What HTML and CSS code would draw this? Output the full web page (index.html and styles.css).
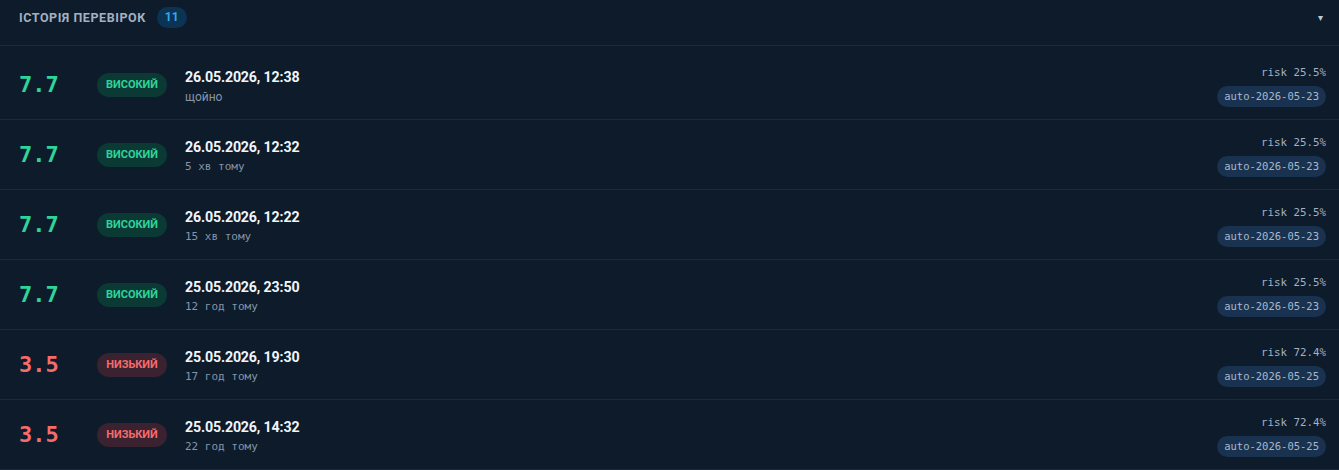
FILE: index.html
```html
<!DOCTYPE html>
<html lang="uk">
<head>
<meta charset="utf-8">
<title>Історія перевірок</title>
<link rel="stylesheet" href="styles.css">
</head>
<body>
<section class="panel">
  <header class="panel-head">
    <div class="head-left">
      <h2 class="title">Історія перевірок</h2>
      <span class="count">11</span>
    </div>
    <span class="caret">▾</span>
  </header>
  <ul class="list">
    <li class="row">
      <span class="score high">7.7</span>
      <span class="level high">високий</span>
      <div class="when"><div class="date">26.05.2026, 12:38</div><div class="ago sans">щойно</div></div>
      <div class="meta"><span class="risk">risk 25.5%</span><span class="tag">auto-2026-05-23</span></div>
    </li>
    <li class="row">
      <span class="score high">7.7</span>
      <span class="level high">високий</span>
      <div class="when"><div class="date">26.05.2026, 12:32</div><div class="ago">5 хв тому</div></div>
      <div class="meta"><span class="risk">risk 25.5%</span><span class="tag">auto-2026-05-23</span></div>
    </li>
    <li class="row">
      <span class="score high">7.7</span>
      <span class="level high">високий</span>
      <div class="when"><div class="date">26.05.2026, 12:22</div><div class="ago">15 хв тому</div></div>
      <div class="meta"><span class="risk">risk 25.5%</span><span class="tag">auto-2026-05-23</span></div>
    </li>
    <li class="row">
      <span class="score high">7.7</span>
      <span class="level high">високий</span>
      <div class="when"><div class="date">25.05.2026, 23:50</div><div class="ago">12 год тому</div></div>
      <div class="meta"><span class="risk">risk 25.5%</span><span class="tag">auto-2026-05-23</span></div>
    </li>
    <li class="row">
      <span class="score low">3.5</span>
      <span class="level low">низький</span>
      <div class="when"><div class="date">25.05.2026, 19:30</div><div class="ago">17 год тому</div></div>
      <div class="meta"><span class="risk">risk 72.4%</span><span class="tag">auto-2026-05-25</span></div>
    </li>
    <li class="row">
      <span class="score low">3.5</span>
      <span class="level low">низький</span>
      <div class="when"><div class="date">25.05.2026, 14:32</div><div class="ago">22 год тому</div></div>
      <div class="meta"><span class="risk">risk 72.4%</span><span class="tag">auto-2026-05-25</span></div>
    </li>
  </ul>
</section>
</body>
</html>
```

FILE: styles.css
```css
* { box-sizing: border-box; }
html, body {
  margin: 0;
  padding: 0;
  background: #0d1b2b;
  font-family: Roboto, "Noto Sans", sans-serif;
  color: #e6edf5;
}
.panel {
  background: #0d1b2b;
}
.panel-head {
  height: 46px;
  display: flex;
  align-items: center;
  justify-content: space-between;
  padding: 0 16px 11px 19px;
  border-bottom: 1px solid #1b2a3d;
}
.head-left {
  display: flex;
  align-items: center;
  gap: 11px;
}
.title {
  margin: 0;
  font-size: 12.5px;
  font-weight: 700;
  text-transform: uppercase;
  letter-spacing: 0.55px;
  color: #a3b1c2;
}
.count {
  display: inline-flex;
  align-items: center;
  justify-content: center;
  height: 21px;
  min-width: 29px;
  padding: 0 8px;
  border-radius: 11px;
  background: #0b3454;
  color: #3aa6e8;
  font-size: 12px;
  font-weight: 700;
}
.caret {
  font-size: 10px;
  color: #c0cad6;
}
.list {
  list-style: none;
  margin: 0;
  padding: 4px 0 0;
}
.row {
  height: 70px;
  display: flex;
  align-items: center;
  padding: 0 13px 0 19px;
  border-bottom: 1px solid #1b2a3d;
}
.score {
  width: 60px;
  margin-right: 18px;
  font-family: "DejaVu Sans Mono", monospace;
  font-size: 22px;
  font-weight: 700;
  line-height: 1;
}
.score.high { color: #2fd49b; }
.score.low { color: #f76b6b; }
.level {
  display: inline-flex;
  align-items: center;
  justify-content: center;
  width: 70px;
  height: 24px;
  border-radius: 12px;
  font-size: 11px;
  font-weight: 700;
  text-transform: uppercase;
  margin-right: 18px;
}
.level.high { background: #0b3a35; color: #2fd49b; }
.level.low { background: #3a2230; color: #f76b6b; }
.when {
  flex: 1;
  display: flex;
  flex-direction: column;
  gap: 1px;
  padding-top: 4px;
}
.date {
  font-size: 14.2px;
  font-weight: 700;
  letter-spacing: -0.15px;
  color: #f1f5f9;
  line-height: 20px;
}
.ago {
  font-family: "DejaVu Sans Mono", monospace;
  font-size: 11px;
  color: #8595a8;
  line-height: 18px;
}
.ago.sans {
  font-family: Roboto, sans-serif;
  font-size: 12px;
}
.meta {
  display: flex;
  flex-direction: column;
  align-items: flex-end;
  gap: 6px;
  padding-top: 3px;
}
.risk {
  font-family: "DejaVu Sans Mono", monospace;
  font-size: 10.8px;
  color: #a3b1c2;
  line-height: 14px;
}
.tag {
  display: inline-flex;
  align-items: center;
  height: 21px;
  padding: 0 7px;
  border-radius: 11px;
  background: #183250;
  color: #a9b9cc;
  font-family: "DejaVu Sans Mono", monospace;
  font-size: 10.5px;
}
```
